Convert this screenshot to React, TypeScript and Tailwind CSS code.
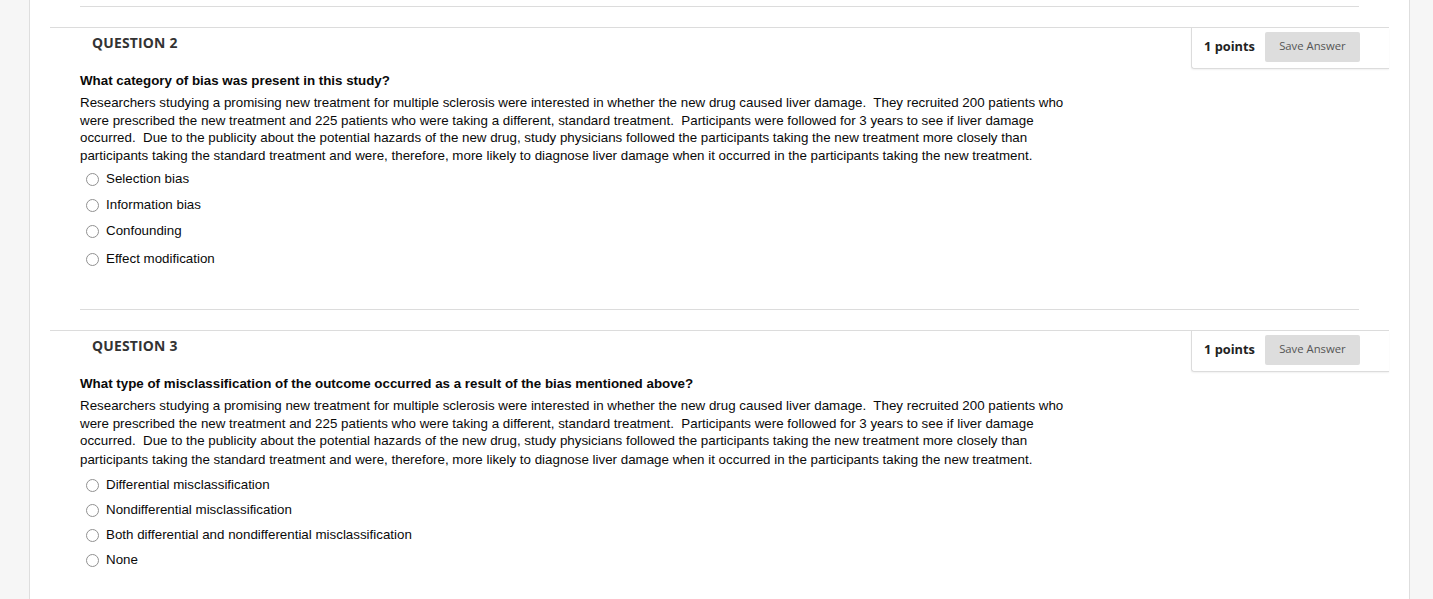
import { ReactElement } from "react";

interface Question {
  number: number;
  title: string;
  lines: string[];
  options: string[];
  loose?: boolean;
}

const body = [
  "Researchers studying a promising new treatment for multiple sclerosis were interested in whether the new drug caused liver damage.\u00a0 They recruited 200 patients who",
  "were prescribed the new treatment and 225 patients who were taking a different, standard treatment.\u00a0 Participants were followed for 3 years to see if liver damage",
  "occurred.\u00a0 Due to the publicity about the potential hazards of the new drug, study physicians followed the participants taking the new treatment more closely than",
  "participants taking the standard treatment and were, therefore, more likely to diagnose liver damage when it occurred in the participants taking the new treatment.",
];

const questions: Question[] = [
  {
    number: 2,
    title: "What category of bias was present in this study?",
    lines: body,
    options: ["Selection bias", "Information bias", "Confounding", "Effect modification"],
  },
  {
    number: 3,
    title: "What type of misclassification of the outcome occurred as a result of the bias mentioned above?",
    lines: body,
    options: [
      "Differential misclassification",
      "Nondifferential misclassification",
      "Both differential and nondifferential misclassification",
      "None",
    ],
    loose: true,
  },
];

const QuestionBlock = ({ q }: { q: Question }): ReactElement => {
  return (
    <div>
      <div className="mx-[20px] border-t border-[#dcdcdc]">
        <div className="flex items-start justify-between">
          <div className="pl-[42px] pt-[5px] text-[13.9px] font-bold tracking-[0.2px] text-[#333] [font-family:'Open_Sans',sans-serif]">
            QUESTION {q.number}
          </div>
          <div className="flex h-[41px] w-[198px] items-center rounded-bl-[3px] border-b border-l border-[#dcdcdc] pb-[3px] pl-[12px] shadow-[0_1px_2px_rgba(0,0,0,0.06)]">
            <span className="text-[12.8px] font-bold text-[#222] [font-family:'Open_Sans',sans-serif]">1 points</span>
            <button className="ml-[10px] h-[30px] w-[95px] rounded-[2px] bg-[#dddddd] text-[11.3px] text-[#555] [font-family:'Open_Sans',sans-serif]">
              Save Answer
            </button>
          </div>
        </div>
        <div className="pl-[30px] pt-[3px] text-[#0a0a0a] [font-family:'Liberation_Sans',Arial,sans-serif]">
          <div className="text-[13.35px] font-bold leading-[18px]">{q.title}</div>
          <div className="mt-[4px] text-[13.35px] leading-[17.5px]">
            {q.lines.map((l, i) => (
              <div key={i} className={`whitespace-nowrap ${q.loose && i === 3 ? "pt-[1px]" : ""}`}>
                {l}
              </div>
            ))}
          </div>
          <div className={`flex flex-col pl-[6px] ${q.loose ? "mt-[5px]" : "mt-[2px]"}`}>
            {q.options.map((o, i) => (
              <label
                key={i}
                className={`flex items-center text-[13.35px] ${q.loose ? "h-[25px]" : i === 3 ? "h-[29px] pt-[1px]" : "h-[26px]"}`}
              >
                <input type="radio" name={`q${q.number}`} className="m-0 h-[13px] w-[13px] opacity-80" />
                <span className="ml-[7px]">{o}</span>
              </label>
            ))}
          </div>
        </div>
        <div className={`mx-[30px] border-b border-[#dcdcdc] ${q.loose ? "mt-[38px]" : "mt-[36px]"}`} />
        <div className="h-[20px]" />
      </div>
    </div>
  );
};

export default function App(): ReactElement {
  return (
    <div className="flex h-[599px] w-full overflow-hidden bg-[#f6f6f6]">
      <div className="w-[30px] shrink-0 border-r border-[#dedede]" />
      <div className="flex-1 bg-white">
        <div className="mx-[50px] h-[7px] border-b border-[#dcdcdc]" />
        <div className="h-[20px]" />
        {questions.map((q) => (
          <QuestionBlock key={q.number} q={q} />
        ))}
      </div>
      <div className="w-[24px] shrink-0 border-l border-[#dedede]" />
    </div>
  );
}
